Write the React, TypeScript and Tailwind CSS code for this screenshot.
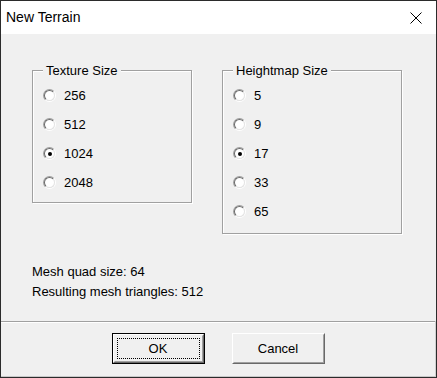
import { type ReactNode } from "react";

const bodyFont = { fontFamily: '"Liberation Sans", Arial, sans-serif' };

const textureSizes = [
  { label: "256", checked: false },
  { label: "512", checked: false },
  { label: "1024", checked: true },
  { label: "2048", checked: false },
];

const heightmapSizes = [
  { label: "5", checked: false },
  { label: "9", checked: false },
  { label: "17", checked: true },
  { label: "33", checked: false },
  { label: "65", checked: false },
];

function Radio({ checked }: { checked: boolean }) {
  return (
    <span className="flex h-[13px] w-[13px] shrink-0 rounded-full border border-t-[#a0a0a0] border-l-[#a0a0a0] border-r-white border-b-white">
      <span className="flex h-full w-full items-center justify-center rounded-full border border-t-[#696969] border-l-[#696969] border-r-[#e3e3e3] border-b-[#e3e3e3] bg-white">
        {checked && <span className="h-[4px] w-[4px] rounded-full bg-black" />}
      </span>
    </span>
  );
}

function GroupBox({
  title,
  className,
  children,
}: {
  title: string;
  className: string;
  children: ReactNode;
}) {
  return (
    <div
      className={`relative border border-[#a0a0a0] shadow-[inset_1px_1px_0_#fff,1px_1px_0_#fff] ${className}`}
    >
      <span className="absolute -top-[8px] left-[10px] bg-[#f0f0f0] px-[3px] text-[13px] leading-[15px] text-black">
        {title}
      </span>
      <div className="flex flex-col pt-[10px] pl-[10px]">{children}</div>
    </div>
  );
}

function RadioRow({ label, checked }: { label: string; checked: boolean }) {
  return (
    <label className="flex h-[29px] items-center text-[13px] text-black">
      <Radio checked={checked} />
      <span className="ml-[8px]">{label}</span>
    </label>
  );
}

function DialogButton({ label, isDefault }: { label: string; isDefault?: boolean }) {
  if (isDefault) {
    return (
      <button
        type="button"
        className="h-[31px] w-[93px] border border-black bg-[#f0f0f0] p-0"
      >
        <span className="flex h-full w-full border border-t-white border-l-white border-r-[#696969] border-b-[#696969]">
          <span className="flex h-full w-full border border-t-[#f0f0f0] border-l-[#f0f0f0] border-r-[#a0a0a0] border-b-[#a0a0a0] p-[2px]">
            <span className="flex h-full w-full items-center justify-center border border-dotted border-black text-[13px] text-black">
              {label}
            </span>
          </span>
        </span>
      </button>
    );
  }

  return (
    <button
      type="button"
      className="h-[31px] w-[93px] border border-t-white border-l-white border-r-[#696969] border-b-[#696969] bg-[#f0f0f0] p-0"
    >
      <span className="flex h-full w-full items-center justify-center border border-t-[#f0f0f0] border-l-[#f0f0f0] border-r-[#a0a0a0] border-b-[#a0a0a0] text-[13px] text-black">
        {label}
      </span>
    </button>
  );
}

export default function App() {
  return (
    <div
      className="flex h-[378px] w-[437px] flex-col border border-[#2b2b2b] bg-[#f0f0f0]"
      style={bodyFont}
    >
      <div className="flex h-[33px] shrink-0 items-center justify-between bg-white pl-[5px] pr-[14px]">
        <span className="text-[14px] text-black">New Terrain</span>
        <svg width="12" height="12" viewBox="0 0 12 12" className="block">
          <path d="M0.5 0.5 L11.5 11.5 M11.5 0.5 L0.5 11.5" stroke="#000" strokeWidth="1" fill="none" />
        </svg>
      </div>

      <div className="flex flex-1 flex-col pl-[31px] pt-[36px]">
        <div className="flex items-start">
          <GroupBox title="Texture Size" className="h-[133px] w-[160px]">
            {textureSizes.map((item) => (
              <RadioRow key={item.label} label={item.label} checked={item.checked} />
            ))}
          </GroupBox>
          <GroupBox title="Heightmap Size" className="ml-[30px] h-[164px] w-[180px]">
            {heightmapSizes.map((item) => (
              <RadioRow key={item.label} label={item.label} checked={item.checked} />
            ))}
          </GroupBox>
        </div>

        <div className="mt-[28px] text-[13px] leading-[20px] text-black">
          <p>Mesh quad size: 64</p>
          <p>Resulting mesh triangles: 512</p>
        </div>
      </div>

      <div className="flex h-[56px] shrink-0 flex-col border-r border-b border-r-[#d0d0d0] border-b-[#c8c8c8]">
        <div className="h-px bg-[#a0a0a0]" />
        <div className="h-px bg-white" />
        <div className="flex justify-center gap-[27px] pt-[10px]">
          <DialogButton label="OK" isDefault />
          <DialogButton label="Cancel" />
        </div>
      </div>
    </div>
  );
}
